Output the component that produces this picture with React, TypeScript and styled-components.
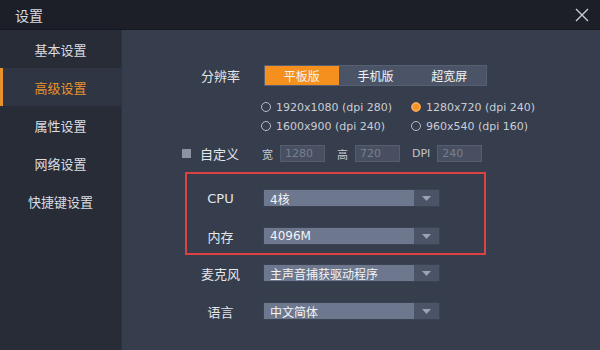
import React from "react";
import styled, { createGlobalStyle } from "styled-components";

const Global = createGlobalStyle`
  html, body { margin: 0; padding: 0; background: #363d4c; }
  body { font-family: "DejaVu Sans", "Noto Sans CJK SC", sans-serif; }
  * { box-sizing: border-box; }
`;

const Window = styled.div`
  width: 600px;
  height: 350px;
  display: flex;
  flex-direction: column;
  overflow: hidden;
  background: #363d4c;
`;

const TitleBar = styled.div`
  height: 30px;
  flex: none;
  background: #1c1f28;
  display: flex;
  align-items: center;
  justify-content: space-between;
  padding: 0 10px 0 15px;
  border-bottom: 1px solid #15181f;
`;

const Title = styled.div`
  color: #d7dae0;
  font-size: 14px;
  font-family: "Noto Sans CJK SC", sans-serif;
`;

const Close = styled.div`
  width: 16px;
  height: 16px;
  display: flex;
  align-items: center;
  justify-content: center;
`;

const Body = styled.div`
  flex: 1;
  display: flex;
`;

const Sidebar = styled.div`
  width: 122px;
  flex: none;
  background: #272c37;
  display: flex;
  flex-direction: column;
  border-right: 1px solid #2c3240;
`;

const NavItem = styled.div<{ $active?: boolean }>`
  height: 38px;
  display: flex;
  align-items: center;
  justify-content: center;
  font-family: "Noto Sans CJK SC", sans-serif;
  font-size: 13px;
  color: ${(p) => (p.$active ? "#e8922c" : "#d9dce2")};
  background: ${(p) => (p.$active ? "#2f3542" : "transparent")};
  border-left: 3px solid ${(p) => (p.$active ? "#e8922c" : "transparent")};
  padding-right: 3px;
`;

const Main = styled.div`
  flex: 1;
  display: flex;
  flex-direction: column;
  padding: 35px 0 0 65px;
`;

const Row = styled.div<{ $mt?: number; $h?: number }>`
  display: flex;
  align-items: center;
  height: ${(p) => p.$h ?? 18}px;
  margin-top: ${(p) => p.$mt ?? 0}px;
`;

const Label = styled.div`
  width: 76px;
  flex: none;
  text-align: center;
  color: #e3e6ea;
  font-size: 13px;
  padding-right: 9px;
`;

const Segmented = styled.div`
  display: flex;
  width: 223px;
  height: 21px;
  margin-left: 1px;
  border: 1px solid #556073;
  background: #4b5467;
`;

const Segment = styled.div<{ $active?: boolean }>`
  flex: 1;
  display: flex;
  align-items: center;
  justify-content: center;
  font-size: 12px;
  color: #f2f3f5;
  background: ${(p) => (p.$active ? "#f5901e" : "transparent")};
`;

const RadioGrid = styled.div`
  display: grid;
  grid-template-columns: 150px 90px;
  row-gap: 1px;
  margin: 12px 0 0 74px;
`;

const Radio = styled.div`
  display: flex;
  align-items: center;
  gap: 5px;
  height: 18px;
  font-size: 11px;
  color: #c9cdd5;
  white-space: nowrap;
`;

const Dot = styled.span<{ $on?: boolean }>`
  width: 10px;
  height: 10px;
  border-radius: 50%;
  flex: none;
  border: 1px solid ${(p) => (p.$on ? "#f5a04a" : "#b7bcc6")};
  background: ${(p) => (p.$on ? "radial-gradient(circle, #f7931e 0 3px, #f2b070 3.5px)" : "transparent")};
`;

const CheckLabel = styled.div`
  width: 76px;
  flex: none;
  display: flex;
  align-items: center;
  gap: 9px;
  margin-left: -5px;
  color: #e3e6ea;
  font-size: 13px;
`;

const Check = styled.span`
  width: 9px;
  height: 9px;
  background: #8a92a3;
  flex: none;
`;

const Small = styled.span<{ $ml?: number }>`
  color: #c3c7cf;
  font-size: 11px;
  margin-left: ${(p) => p.$ml ?? 0}px;
  margin-right: 7px;
`;

const Input = styled.div<{ $w: number }>`
  width: ${(p) => p.$w}px;
  height: 17px;
  background: #474f60;
  border: 1px solid #565e6e;
  color: #778090;
  font-size: 11px;
  display: flex;
  align-items: center;
  padding-left: 4px;
`;

const HighlightBox = styled.div`
  margin: 10px 0 0 -2px;
  width: 301px;
  border: 2px solid #dc4242;
  padding: 15px 0 8px 0;
  display: flex;
  flex-direction: column;
  gap: 20px;
`;

const Select = styled.div`
  width: 177px;
  height: 18px;
  display: flex;
  background: #6d778d;
  border: 1px solid #3b4252;
`;

const SelectText = styled.div`
  flex: 1;
  color: #f3f4f6;
  font-size: 12px;
  display: flex;
  align-items: center;
  padding-left: 6px;
  white-space: nowrap;
`;

const Arrow = styled.div`
  width: 25px;
  background: #4b5366;
  display: flex;
  align-items: center;
  justify-content: center;
`;

const Tri = () => (
  <svg width="9" height="5" viewBox="0 0 9 5">
    <path d="M0 0 H9 L4.5 5 Z" fill="#9aa2b3" />
  </svg>
);

const Dropdown = ({ value }: { value: string }) => (
  <Select>
    <SelectText>{value}</SelectText>
    <Arrow>
      <Tri />
    </Arrow>
  </Select>
);

export default function App() {
  const nav = ["基本设置", "高级设置", "属性设置", "网络设置", "快捷键设置"];
  return (
    <Window>
      <Global />
      <TitleBar>
        <Title>设置</Title>
        <Close>
          <svg width="14" height="14" viewBox="0 0 14 14">
            <path d="M1 1 L13 13 M13 1 L1 13" stroke="#c9ccd3" strokeWidth="1.4" />
          </svg>
        </Close>
      </TitleBar>
      <Body>
        <Sidebar>
          {nav.map((n, i) => (
            <NavItem key={n} $active={i === 1}>
              {n}
            </NavItem>
          ))}
        </Sidebar>
        <Main>
          <Row $h={21}>
            <Label>分辨率</Label>
            <Segmented>
              <Segment $active>平板版</Segment>
              <Segment>手机版</Segment>
              <Segment>超宽屏</Segment>
            </Segmented>
          </Row>
          <RadioGrid>
            <Radio>
              <Dot />
              1920x1080 (dpi 280)
            </Radio>
            <Radio>
              <Dot $on />
              1280x720 (dpi 240)
            </Radio>
            <Radio>
              <Dot />
              1600x900 (dpi 240)
            </Radio>
            <Radio>
              <Dot />
              960x540 (dpi 160)
            </Radio>
          </RadioGrid>
          <Row $mt={10} $h={17}>
            <CheckLabel>
              <Check />
              自定义
            </CheckLabel>
            <Small $ml={4}>宽</Small>
            <Input $w={45}>1280</Input>
            <Small $ml={12}>高</Small>
            <Input $w={45}>720</Input>
            <Small $ml={12}>DPI</Small>
            <Input $w={45}>240</Input>
          </Row>
          <HighlightBox>
            <Row>
              <Label>CPU</Label>
              <Dropdown value="4核" />
            </Row>
            <Row>
              <Label>内存</Label>
              <Dropdown value="4096M" />
            </Row>
          </HighlightBox>
          <Row $mt={9}>
            <Label>麦克风</Label>
            <Dropdown value="主声音捕获驱动程序" />
          </Row>
          <Row $mt={20}>
            <Label>语言</Label>
            <Dropdown value="中文简体" />
          </Row>
        </Main>
      </Body>
    </Window>
  );
}
